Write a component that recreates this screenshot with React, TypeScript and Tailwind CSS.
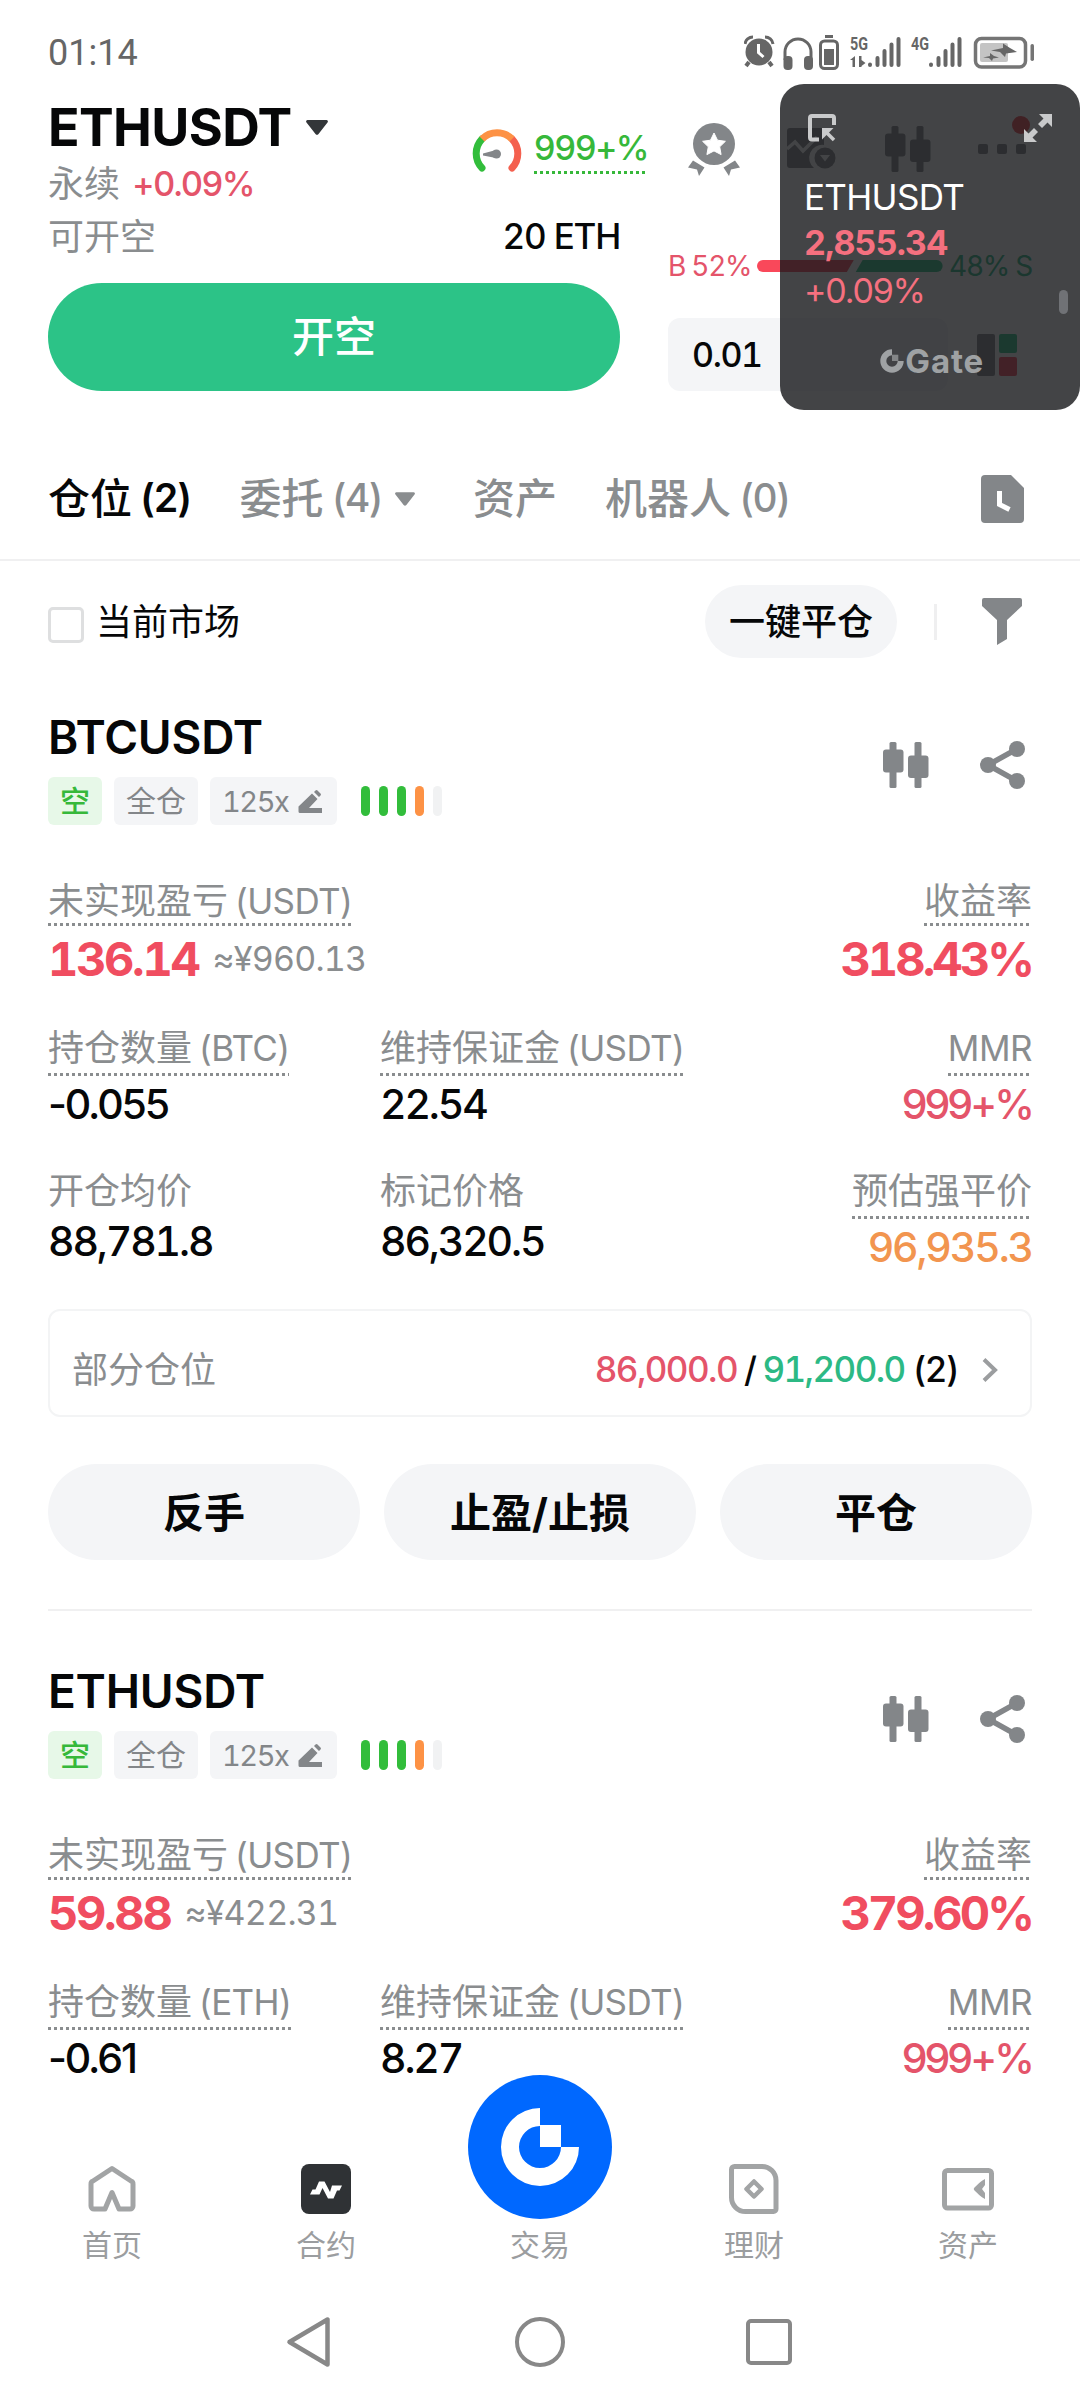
import clsx from "clsx";
import type { ReactNode } from "react";

type Stat = { label: string; value: string; tone?: "red" | "orange"; dotted?: boolean };

type Position = {
  symbol: string;
  coin: string;
  pnl: string;
  pnlCny: string;
  roi: string;
  size: string;
  margin: string;
  prices?: Stat[];
  tpsl?: { low: string; high: string; count: number };
};

const positions: Position[] = [
  {
    symbol: "BTCUSDT",
    coin: "BTC",
    pnl: "136.14",
    pnlCny: "≈¥960.13",
    roi: "318.43%",
    size: "-0.055",
    margin: "22.54",
    prices: [
      { label: "开仓均价", value: "88,781.8" },
      { label: "标记价格", value: "86,320.5" },
      { label: "预估强平价", value: "96,935.3", tone: "orange", dotted: true },
    ],
    tpsl: { low: "86,000.0", high: "91,200.0", count: 2 },
  },
  {
    symbol: "ETHUSDT",
    coin: "ETH",
    pnl: "59.88",
    pnlCny: "≈¥422.31",
    roi: "379.60%",
    size: "-0.61",
    margin: "8.27",
  },
];

export default function App() {
  return (
    <div className="relative flex h-[2400px] w-[1080px] flex-col overflow-hidden bg-white font-['Inter','Noto_Sans_CJK_SC',sans-serif] text-[#060708] tabular-nums">
      <StatusBar />
      <TradeHeader />
      <Tabs />
      <FilterRow />
      <main className="flex-1">
        {positions.map((p) => (
          <PositionCard key={p.symbol} p={p} />
        ))}
      </main>
      <BottomNav />
      <SystemNav />
      <FloatingTicker />
    </div>
  );
}

function StatusBar() {
  return (
    <div className="flex h-[84px] shrink-0 items-center justify-between pt-[21px] pr-[46px] pl-12 text-[#666]">
      <span className="font-['Roboto',sans-serif] text-[36px] leading-none">01:14</span>
      <svg className="-my-2" width="290" height="52" viewBox="744 27 290 52" fill="#666">
        {/* alarm */}
        <circle cx="759" cy="52" r="13.5" />
        <path d="M745 44a8 8 0 0 1 8-7M773 44a8 8 0 0 0-8-7" fill="none" stroke="#666" strokeWidth="3" />
        <path d="M749 62l-3 4M769 62l3 4" stroke="#666" strokeWidth="4" />
        <path d="M758.500 44v8.500l5 4.500" fill="none" stroke="#fff" strokeWidth="3" />
        {/* headphones */}
        <path d="M785 60v-8a13 13 0 0 1 26 0v8" fill="none" stroke="#666" strokeWidth="3" />
        <rect x="783.500" y="56" width="9" height="14" rx="4" />
        <rect x="804" y="56" width="9" height="14" rx="4" />
        {/* headset battery */}
        <rect x="825" y="35" width="8" height="3" />
        <rect x="820.500" y="41" width="17" height="27.500" rx="4" fill="none" stroke="#666" strokeWidth="3" />
        <rect x="824" y="49" width="10" height="16" />
        {/* sim 1 */}
        <text x="850" y="50" fontSize="18" fontWeight="700" textLength="18" lengthAdjust="spacingAndGlyphs" fontFamily="Roboto">5G</text>
        <path d="M850 60l5-4v11h-2.500v-7zM859 56h2.500v4l4 3-4 3v1H859z" />
        <g stroke="#666" strokeWidth="4" strokeLinecap="round">
          <path d="M870 64.500v.5M877.500 58v7M884.500 51v14M891.500 44.500v20.500M898.500 39v26" />
          <path d="M931 64.500v.5M938.500 58v7M945.500 51v14M952.500 44.500v20.500M959.500 39v26" />
        </g>
        {/* sim 2 */}
        <text x="911" y="50" fontSize="18" fontWeight="700" textLength="18" lengthAdjust="spacingAndGlyphs" fontFamily="Roboto">4G</text>
        {/* battery */}
        <rect x="975.500" y="38.500" width="50" height="28.500" rx="6" fill="none" stroke="#757575" strokeWidth="3.500" />
        <rect x="980" y="43" width="28" height="19" rx="2" fill="#c4c4c4" />
        <path d="M991 50.500l12-2.500 0-4.500 7 4.500 7 4-11 1.500-1 3.500-5-5zM983 57.500l7-1.500 0-3 4 3 5 1.500-6 1-1 2.500-3-3z" />
        <rect x="1030.500" y="44" width="3.500" height="17" rx="1.700" fill="#757575" />
      </svg>
    </div>
  );
}

function TradeHeader() {
  return (
    <header className="flex h-[307px] shrink-0 pr-12 pl-12">
      <div className="w-[572px]">
        <div className="flex justify-between">
          <div>
            <h1 className="flex h-[87px] items-center gap-[14px] text-[52px] leading-none font-bold tracking-[-0.012em]">
              ETHUSDT
              <Caret className="h-[15px] w-[22px] text-[#333639]" />
            </h1>
            <div className="flex h-[26px] items-center gap-3 text-[36px] leading-none text-[#8a8d8f]">
              永续
              <span className="text-[34px] font-medium tracking-[-0.04em] normal-nums text-[#e4546a]">+0.09%</span>
            </div>
          </div>
          <div className="mr-[-28px] flex items-center gap-3 pt-[18px]">
            <Gauge />
            <Dotted className="text-[#36b83a]">
              <span className="flex h-[45px] items-center text-[34px] leading-none font-medium tracking-[-0.045em]">999+%</span>
            </Dotted>
          </div>
        </div>
        <div className="flex h-[79px] items-center justify-between leading-none">
          <span className="text-[36px] text-[#8a8d8f]">可开空</span>
          <span className="text-[35px] font-medium tracking-[-0.035em]">20 ETH</span>
        </div>
        <button className="mt-[7px] flex h-[108px] w-full items-center justify-center rounded-full bg-[#2cc387] text-[42px] leading-none font-medium text-white">
          开空
        </button>
      </div>

      <div className="ml-12 flex-1">
        <div className="flex h-28 items-center justify-between pt-[18px] pl-5 text-[#838689]">
          <Medal />
          <ChartAlertIcon />
          <Candles />
          <div className="relative flex gap-[9px] pr-1.5">
            <span className="size-[10px] rounded-xs bg-current" />
            <span className="size-[10px] rounded-xs bg-current" />
            <span className="size-[10px] rounded-xs bg-current" />
            <span className="absolute -top-[28px] right-[2px] size-[18px] rounded-full bg-[#f0464e]" />
          </div>
        </div>
        <div className="flex h-[122px] items-center gap-1.5 pt-[18px] text-[28px] leading-none tracking-[-0.045em]">
          <span className="text-[#e4546a]">B 52%</span>
          <svg className="h-3 flex-1" viewBox="0 0 188 12" preserveAspectRatio="none">
            <path d="M6 0H98L91 12H6A6 6 0 0 1 6 0Z" fill="#f9485a" />
            <path d="M107 0H182A6 6 0 0 1 182 12H100Z" fill="#2cc387" />
          </svg>
          <span className="text-[#2cb984]">48% S</span>
        </div>
        <div className="flex h-[73px] items-center justify-between">
          <div className="flex h-full w-[280px] items-center rounded-xl bg-[#f4f5f7] pl-6 text-[34px] leading-none font-medium tracking-[-0.04em]">
            0.01
          </div>
          <div className="mr-[15px] flex h-[42px] gap-1">
            <span className="w-[18px] rounded-xs bg-[#838689]" />
            <span className="flex w-[18px] flex-col gap-1">
              <span className="flex-1 rounded-xs bg-[#2cc387]" />
              <span className="flex-1 rounded-xs bg-[#f9485a]" />
            </span>
          </div>
        </div>
      </div>
    </header>
  );
}

function Tabs() {
  return (
    <nav className="flex h-[170px] shrink-0 items-center border-b-2 border-[#f0f0f1] pt-12 pr-14 pl-12 text-[42px] leading-none font-medium text-[#8a8d8f]">
      <TabLabel name="仓位" count={2} active />
      <div className="ml-[49px] flex items-center gap-[13px]">
        <TabLabel name="委托" count={4} />
        <Caret className="h-[14px] w-5" />
      </div>
      <span className="ml-[58px]">资产</span>
      <div className="ml-[48px]">
        <TabLabel name="机器人" count={0} />
      </div>
      <svg className="ml-auto" width="43" height="48" viewBox="0 0 43 48">
        <path d="M4 0H30L43 13V44a4 4 0 0 1-4 4H4a4 4 0 0 1-4-4V4a4 4 0 0 1 4-4Z" fill="#838689" />
        <path d="M18.500 16V29.500L28.500 34.500" fill="none" stroke="#fff" strokeWidth="5" />
      </svg>
    </nav>
  );
}

function TabLabel({ name, count, active }: { name: string; count: number; active?: boolean }) {
  return (
    <span className={clsx("flex gap-2", active && "text-[#060708]")}>
      {name}
      <span className={clsx("text-[39px] tracking-[-0.045em]", active ? "font-semibold" : "font-medium")}>({count})</span>
    </span>
  );
}

function FilterRow() {
  return (
    <div className="flex h-[120px] shrink-0 items-center pt-px pr-[57px] pl-12 text-[36px] leading-none">
      <span className="mt-1.5 size-9 rounded-[5px] border-[3px] border-[#dedfe0]" />
      <span className="ml-3">当前市场</span>
      <button className="ml-auto flex h-[73px] items-center rounded-full bg-[#f4f5f7] px-6 font-medium">一键平仓</button>
      <span className="ml-[37px] h-9 w-[3px] bg-[#efeff0]" />
      <svg className="ml-[44px]" width="42" height="47" viewBox="0 0 42 47" fill="#838689">
        <path d="M3 0H39a2 2 0 0 1 2 2V8L26 22V41L16 47V22L1 8V2a2 2 0 0 1 2-2Z" />
      </svg>
    </div>
  );
}

function PositionCard({ p }: { p: Position }) {
  return (
    <section className="px-12 pt-7">
      <div className="flex items-center justify-between">
        <div>
          <h2 className="flex h-14 items-center text-[46px] leading-none font-semibold tracking-[-0.005em]">{p.symbol}</h2>
          <div className="mt-3 flex h-12 items-center text-[30px] leading-none text-[#838689]">
            <span className="flex h-full items-center rounded-md bg-[#e7f8e8] px-3 font-medium text-[#36b83a]">空</span>
            <span className="ml-3 flex h-full items-center rounded-md bg-[#f4f5f7] px-3">全仓</span>
            <span className="ml-3 flex h-full items-center gap-2.5 rounded-md bg-[#f4f5f7] pr-[15px] pl-3">
              <span className="text-[29px] tracking-[-0.05em]">125x</span>
              <svg width="24" height="23" viewBox="0 0 24 23" fill="#838689">
                <path d="M14 3.500 19.500 9 11 18H24V23H2a1.500 1.500 0 0 1-1.500-1.500V16.500ZM16 2 17.500.500a1.500 1.500 0 0 1 2 0L22.500 3.500a1.500 1.500 0 0 1 0 2L21 7Z" />
              </svg>
            </span>
            <span className="ml-6 flex gap-[9px]">
              <span className="h-[30px] w-[9px] rounded-full bg-[#32bd3b]" />
              <span className="h-[30px] w-[9px] rounded-full bg-[#32bd3b]" />
              <span className="h-[30px] w-[9px] rounded-full bg-[#32bd3b]" />
              <span className="h-[30px] w-[9px] rounded-full bg-[#fd9245]" />
              <span className="h-[30px] w-[9px] rounded-full bg-[#f1f2f3]" />
            </span>
          </div>
        </div>
        <div className="flex items-center gap-[51px] pr-[6px] pb-1 text-[#838689]">
          <Candles />
          <ShareIcon />
        </div>
      </div>

      <div className="mt-[54px] flex justify-between">
        <div>
          <Label dotted>未实现盈亏 (USDT)</Label>
          <div className="flex h-[65px] items-center gap-[14px] text-[#f04d60]">
            <span className="text-[47px] leading-none font-bold tracking-[-0.05em]">{p.pnl}</span>
            <span className="text-[34px] leading-none tracking-[-0.023em] text-[#8a8d8f]">{p.pnlCny}</span>
          </div>
        </div>
        <div className="flex flex-col items-end">
          <Label dotted>收益率</Label>
          <span className="flex h-[65px] items-center text-[47px] leading-none font-bold tracking-[-0.063em] text-[#f04d60]">{p.roi}</span>
        </div>
      </div>

      <StatRow
        className="mt-[35px]"
        stats={[
          { label: `持仓数量 (${p.coin})`, value: p.size, dotted: true },
          { label: "维持保证金 (USDT)", value: p.margin, dotted: true },
          { label: "MMR", value: "999+%", tone: "red", dotted: true },
        ]}
      />
      {p.prices && <StatRow className="mt-[36px]" stats={p.prices} />}

      {p.tpsl && (
        <>
          <div className="mt-[33px] flex h-[108px] items-center rounded-xl border-2 border-[#f3f4f5] pt-[13px] pr-8 pl-[22px] text-[36px] leading-none">
            <span className="text-[#8a8d8f]">部分仓位</span>
            <div className="ml-auto flex text-[35px] font-medium tracking-[-0.045em]">
              <span className="text-[#e4546a]">{p.tpsl.low}</span>
              <span className="mx-[7px]">/</span>
              <span className="text-[#2cb984]">{p.tpsl.high}</span>
              <span className="ml-2">({p.tpsl.count})</span>
            </div>
            <svg className="ml-6" width="16" height="24" viewBox="0 0 16 24" fill="none">
              <path d="M2 1.500 13 12 2 22.500" stroke="#9b9d9f" strokeWidth="4" />
            </svg>
          </div>
          <div className="mt-[47px] grid grid-cols-3 gap-6">
            {["反手", "止盈/止损", "平仓"].map((t) => (
              <button key={t} className="h-24 rounded-full bg-[#f4f5f7] pt-0.5 text-[41px] leading-none font-bold">
                {t}
              </button>
            ))}
          </div>
          <hr className="mt-[49px] mb-6 border-t-2 border-[#f0f0f1]" />
        </>
      )}
    </section>
  );
}

function StatRow({ stats, className }: { stats: Stat[]; className?: string }) {
  return (
    <div className={clsx("flex", className)}>
      {stats.map((s, i) => (
        <div key={s.label} className={clsx("flex flex-col", i === 0 && "w-[332px] items-start", i === 1 && "items-start", i === 2 && "ml-auto items-end")}>
          <Label dotted={s.dotted} gap>
            {s.label}
          </Label>
          <span
            className={clsx(
              "flex h-[57px] items-center text-[41px] leading-none font-medium",
              // signs are too wide with tabular figures
              /[-+]/.test(s.value) && "normal-nums",
              s.value.includes("+") ? "tracking-[-0.075em]" : "tracking-[-0.052em]",
              s.tone === "red" && "text-[#e4546a]",
              s.tone === "orange" && "text-[#f2954f]",
            )}
          >
            {s.value}
          </span>
        </div>
      ))}
    </div>
  );
}

function Label({ children, dotted, gap }: { children: ReactNode; dotted?: boolean; gap?: boolean }) {
  // the coin suffix is set tighter than the Chinese part
  const text = String(children);
  const at = text.indexOf("(");
  const content = (
    <span className={clsx("flex h-11 w-fit items-center gap-[7px] text-[36px] leading-none", dotted && gap && "mb-[3px]")}>
      {at < 0 ? (
        <span className={clsx(text === "MMR" && "text-[35px] tracking-[-0.015em]")}>{text}</span>
      ) : (
        <>
          <span>{text.slice(0, at).trim()}</span>
          <span className="text-[35px] tracking-[-0.018em] normal-nums">{text.slice(at)}</span>
        </>
      )}
    </span>
  );
  if (!dotted) return <span className="text-[#8a8d8f]">{content}</span>;
  return <Dotted className="w-fit text-[#8a8d8f]">{content}</Dotted>;
}

function Dotted({ children, className }: { children: ReactNode; className?: string }) {
  return (
    <div className={className}>
      {children}
      <div className="h-[3px] bg-[repeating-linear-gradient(90deg,currentColor_0_3px,transparent_3px_6px)]" />
    </div>
  );
}

function BottomNav() {
  return (
    <nav className="grid h-[180px] shrink-0 grid-cols-5 bg-white px-[5px] text-[30px] leading-none text-[#9b9d9f]">
      <NavItem label="首页">
        <svg width="48" height="50" viewBox="0 0 48 50" fill="none" stroke="#a2a4a5" strokeWidth="5" strokeLinejoin="round">
          <path d="M24 4.500 43 17a3 3 0 0 1 2 3V42a3 3 0 0 1-3 3H31L24 28.500 17 45H6a3 3 0 0 1-3-3V20a3 3 0 0 1 2-3Z" />
        </svg>
      </NavItem>
      <NavItem label="合约">
        <svg width="50" height="50" viewBox="0 0 50 50">
          <rect width="50" height="50" rx="8" fill="#2f3235" />
          <path d="M9 30.500 11.500 25.500H14.500L18 17.500H23.500L29 28 31 21.500H41L38.500 26.500H36L32.500 34.500H27L21.500 24 18.500 30.500Z" fill="#fff" />
        </svg>
      </NavItem>
      <NavItem label="交易">
        <svg className="-mt-[83px] -mb-[5px]" width="144" height="144" viewBox="0 0 144 144">
          <circle cx="72" cy="72" r="72" fill="#0068ff" />
          <path d="M72 33A39 39 0 1 0 111 72H93A21 21 0 1 1 72 51Z" fill="#fff" />
          <path d="M72 50H93V72H72Z" fill="#fff" />
        </svg>
      </NavItem>
      <NavItem label="理财">
        <svg width="50" height="50" viewBox="0 0 50 50" fill="none" stroke="#a2a4a5" strokeWidth="5">
          <path d="M5.500 2.500H33A14 14 0 0 1 47 16.500V45a2.500 2.500 0 0 1-2.500 2.500H16.500A14 14 0 0 1 2.500 33.500V5.500a3 3 0 0 1 3-3Z" />
          <path d="M25 17.500 32.500 25 25 32.500 17.500 25Z" strokeLinejoin="round" strokeWidth="4.500" />
        </svg>
      </NavItem>
      <NavItem label="资产">
        <svg width="52" height="50" viewBox="0 0 52 50" fill="none">
          <rect x="2.500" y="6.500" width="47" height="37.500" rx="3" stroke="#a2a4a5" strokeWidth="5" />
          <path d="M43 15V21L40 25 43 29V35C39 33 35 29 32.500 26.500a2 2 0 0 1 0-3C35 21 39 17 43 15Z" fill="#a2a4a5" />
        </svg>
      </NavItem>
    </nav>
  );
}

function NavItem({ label, children }: { label: string; children: ReactNode }) {
  return (
    <div className="flex flex-col items-center justify-end pb-[19px]">
      {children}
      <span className="mt-[11px] flex h-[40px] items-center">{label}</span>
    </div>
  );
}

function SystemNav() {
  return (
    <div className="flex h-[116px] shrink-0 items-center pl-[286px]">
      <svg width="46" height="52" viewBox="0 0 46 52" fill="none" stroke="#888" strokeWidth="4.500" strokeLinejoin="round">
        <path d="M41.500 3.500V48.500L3.500 26Z" />
      </svg>
      <span className="ml-[183px] size-[50px] rounded-full border-[4.500px] border-[#888]" />
      <span className="ml-[181px] size-[46px] rounded-[5px] border-[4.500px] border-[#888]" />
    </div>
  );
}

// always-on-top price window
function FloatingTicker() {
  return (
    <aside className="absolute top-[84px] right-0 flex h-[326px] w-[300px] flex-col rounded-3xl bg-[#18191b]/81 pt-[30px] pr-7 pl-6">
      <div className="flex justify-between pl-1">
        <svg width="28" height="28" viewBox="0 0 28 28" fill="none" stroke="#c9cacb" strokeWidth="4">
          <path d="M11 25.500H4a2 2 0 0 1-2-2V4a2 2 0 0 1 2-2H24a2 2 0 0 1 2 2V11" />
          <path d="M15.500 15.500 26 26" strokeWidth="3.500" />
          <path d="M14 14H25.500L14 25.500Z" fill="#c9cacb" stroke="none" />
        </svg>
        <svg width="28" height="28" viewBox="0 0 28 28" fill="#c9cacb">
          <path d="M15 0H28V13L23.500 8.500 18 14 14 10 19.500 4.500ZM0 15 4.500 19.500 10 14 14 18 8.500 23.500 13 28H0Z" />
        </svg>
      </div>
      <div className="mt-[32px] flex h-[46px] items-center text-[35px] leading-none tracking-[-0.02em] text-white">ETHUSDT</div>
      <div className="flex h-[46px] items-center text-[34px] leading-none font-bold tracking-[-0.025em] text-[#f5707f]">2,855.34</div>
      <div className="flex h-[50px] items-center text-[34px] leading-none tracking-[-0.035em] normal-nums text-[#f5707f]">+0.09%</div>
      <div className="mt-[21px] mr-[68px] ml-auto flex h-[48px] items-center gap-px text-[#9fa2a4]">
        <svg width="24" height="24" viewBox="0 0 80 80" fill="currentColor">
          <path d="M40 1A39 39 0 1 0 79 40H59A19 19 0 1 1 40 21Z" />
          <path d="M40 19H61V40H40Z" opacity=".7" />
        </svg>
        <span className="text-[33px] leading-none font-bold tracking-[0.025em]">Gate</span>
      </div>
      <span className="absolute top-[206px] right-3 h-6 w-[9px] rounded-full bg-[#707276]" />
    </aside>
  );
}

function Caret({ className }: { className?: string }) {
  return (
    <svg className={className} viewBox="0 0 22 15" fill="currentColor">
      <path d="M1.500 0H20.500a1.500 1.500 0 0 1 1 2.500L12.500 14a2 2 0 0 1-3 0L.500 2.500A1.500 1.500 0 0 1 1.500 0Z" />
    </svg>
  );
}

function Candles() {
  return (
    <svg width="46" height="46" viewBox="0 0 46 46" fill="currentColor">
      <rect x="6.500" y="0" width="7" height="46" rx="1.500" />
      <rect x="0" y="7.500" width="20.500" height="23" rx="3" />
      <rect x="31.500" y="0" width="7" height="46" rx="1.500" />
      <rect x="25" y="13.500" width="20.500" height="22.500" rx="3" />
    </svg>
  );
}

function ShareIcon() {
  return (
    <svg width="46" height="48" viewBox="0 0 46 48" fill="currentColor">
      <path d="M37 8 8 24 37 40" fill="none" stroke="currentColor" strokeWidth="5.500" />
      <circle cx="37" cy="8" r="8" />
      <circle cx="8" cy="24" r="8" />
      <circle cx="37" cy="40" r="8" />
    </svg>
  );
}

function ChartAlertIcon() {
  return (
    <svg width="50" height="42" viewBox="0 0 50 42" fill="currentColor">
      <path d="M3 0H34a3 3 0 0 1 3 3V17A13 13 0 0 0 27 40H3a3 3 0 0 1-3-3V3a3 3 0 0 1 3-3Z" />
      <path d="M0 21 8 14 16 23 30 9" fill="none" stroke="#fff" strokeWidth="3.500" />
      <circle cx="38" cy="30" r="10.500" />
      <path d="M33 27H43L38 33.500Z" fill="#fff" />
    </svg>
  );
}

function Medal() {
  return (
    <svg width="52" height="53" viewBox="0 0 52 53">
      <circle cx="26" cy="21" r="21" fill="#838689" />
      <path d="M26 10l3.500 7.200 7.900 1.100-5.700 5.500 1.400 7.800L26 27.900l-7.100 3.700 1.400-7.800-5.700-5.500 7.900-1.100Z" fill="#fff" stroke="#fff" strokeWidth="1" />
      <path d="M5 37.500 16.500 44.500 11 53 9 46.500 0 44.500ZM47 37.500 35.500 44.500 41 53 43 46.500 52 44.500Z" fill="#838689" />
    </svg>
  );
}

function Gauge() {
  return (
    <svg width="50" height="44" viewBox="0 0 50 44" fill="none" strokeWidth="7">
      <path d="M10 40A21 21 0 0 1 10 11" stroke="#32bd3b" strokeLinecap="round" />
      <path d="M40 40A21 21 0 0 0 40 11" stroke="#f4604f" strokeLinecap="round" />
      <path d="M10 11A21 21 0 0 1 40 11" stroke="#fd9245" />
      <path d="M11 25.500 24 22V30L11 27.500Z" fill="#838689" />
      <circle cx="24.500" cy="26" r="4.500" fill="#838689" />
    </svg>
  );
}
